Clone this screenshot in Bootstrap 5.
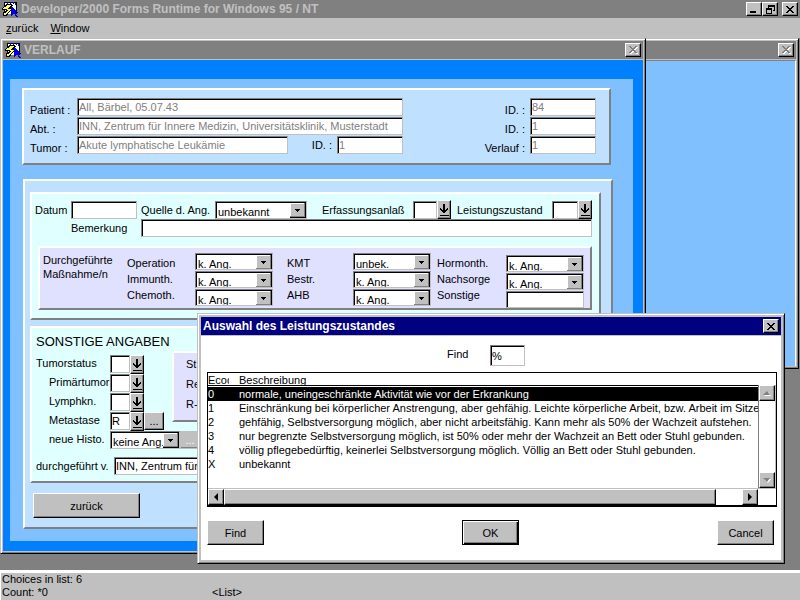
<!DOCTYPE html>
<html lang="de">
<head>
<meta charset="utf-8">
<meta name="viewport" content="width=device-width, initial-scale=1">
<title>Developer/2000 Forms Runtime</title>
<link href="https://cdn.jsdelivr.net/npm/bootstrap@5.3.0/dist/css/bootstrap.min.css" rel="stylesheet">
<style>
:root{--face:#c0c0c0;--shade:#808080;--navy:#000080}
body{font:11px/14px "Liberation Sans",Arial,sans-serif;color:#000;background:var(--shade)}
input,select,button{font:inherit;color:inherit;border-radius:0;margin:0}
h1,h2{font-size:12px;line-height:18px;font-weight:700;margin:0}
label,.tag{white-space:nowrap}

/* title bars */
.titlebar{height:18px;background:var(--shade);color:var(--face);padding:0 2px;overflow:hidden;white-space:nowrap}
.titlebar.active{background:var(--navy);color:#fff}
.app-title{padding-left:3px}
.capbtn{width:16px;height:14px;padding:0;border:1px solid;border-color:#fff #000 #000 #fff;background:var(--face);box-shadow:inset -1px -1px 0 var(--shade);display:flex;align-items:center;justify-content:center}
.menubar{height:20px;background:var(--face);padding:0 6px;gap:12px}
.menubar a{color:#000;text-decoration:none}

/* windows */
.win{border:1px solid;border-color:var(--face) #000 #000 var(--face);box-shadow:inset 1px 1px 0 #fff,inset -1px -1px 0 var(--shade);background:var(--face);padding:2px}
.win-back{left:0;right:1px;top:0;bottom:201px}
.win-main{left:0;right:154px;top:0}
.win-dialog{left:197px;right:15px;top:275px;padding:3px}
.win-main .titlebar,.win-back .titlebar{margin-bottom:1px}
.client{background:#80c0ff;border-top:1px solid var(--shade);border-right:1px solid #fff}
.frame{background:#0080ff;padding:19px 10px 10px 7px}
.sheet{background:#80c0ff;padding:9px 20px 12px 12px}

/* raised panels */
.panel{border:2px solid;border-color:#fff var(--shade) var(--shade) #fff}
.sky{background:#c0e0ff}.mint{background:#e0ffff}.lilac{background:#e0e0ff}

/* fields and buttons */
.fld{height:18px;min-width:0;padding:0 1px;border:1px solid;border-color:var(--shade) var(--face) var(--face) var(--shade);box-shadow:inset 1px 1px 0 #000;background:#fff;outline:0}
.fld[readonly]{color:var(--shade)}
.drop{height:18px;padding:3px 16px 0 2px;line-height:14px;border:1px solid;border-color:var(--shade) var(--face) var(--face) var(--shade);box-shadow:inset 1px 1px 0 #000;appearance:none;outline:0;
background:#fff url("data:image/svg+xml,%3Csvg xmlns='http://www.w3.org/2000/svg' width='16' height='16' shape-rendering='crispEdges'%3E%3Cpath fill='%23000' d='M0 0h16v16H0z'/%3E%3Cpath fill='%23808080' d='M0 1h15v14H0z'/%3E%3Cpath fill='%23fff' d='M0 1h14v13H0z'/%3E%3Cpath fill='%23c0c0c0' d='M1 2h13v12H1z'/%3E%3Cpath d='M5 7h5v1H5zM6 8h3v1H6zM7 9h1v1H7z'/%3E%3C/svg%3E") right center no-repeat}
.pick{width:14px;height:19px;padding:0;border:1px solid;border-color:#fff #000 #000 #fff;background:var(--face);box-shadow:inset -1px -1px 0 var(--shade);display:flex;align-items:center;justify-content:center;flex:none}
.more{width:20px;height:18px;padding:0;line-height:12px;border:1px solid;border-color:#fff #000 #000 #fff;background:var(--face);box-shadow:inset -1px -1px 0 var(--shade);flex:none}
.more:disabled{color:#fff;border-color:var(--face)}
.push{height:25px;padding:0;border:1px solid;border-color:#fff #000 #000 #fff;border-radius:0;background:var(--face);box-shadow:inset -1px -1px 0 var(--shade)}
.w24{width:24px}.w56{width:57px}.w66{width:66px}.w92{width:92px}.w107{width:107px}

/* patient header */
.head-grid{display:grid;grid-template-columns:47px minmax(0,326px) 1fr 66px;grid-auto-rows:18px;row-gap:1px;padding:8px 13px 9px 6px;margin-right:2px}
.head-grid label{align-self:end;line-height:12px}
.head-grid .rlab{text-align:right;padding-right:5px}

/* course data */
.course{margin:14px 0 0 1px;padding:11px 4px 8px}
.topblock{margin:0 6px 0 1px;padding:6px 7px 8px 0}
.topline{padding-left:3px}
.lab-date{width:36px}.lab-src{width:78px;padding-left:4px}.lab-occ{width:106px;padding-left:15px}.lab-perf{width:101px;padding-left:6px}.perf{width:26px}
.remark label{width:109px;padding-left:39px}
.measures{display:grid;grid-template-columns:80px 72px 78px 80px 78px 75px 78px;padding:5px 0 0 3px;margin:9px 0 0 6px}
.stack{display:flex;flex-direction:column;gap:1px}
.stack .fld,.stack .drop{height:17px}
.tags{display:flex;flex-direction:column;gap:2px;padding-top:3px}
.low{padding-top:2px}
.mid{padding-left:14px}.right{padding-left:6px}

/* other data */
.others{margin:6px 6px 0 1px;padding:5px 4px 6px}
.other-title{font-size:13px;font-weight:400;line-height:18px}
.states{width:136px;margin-top:4px}
.state-row{display:grid;grid-template-columns:74px 1fr;height:18px;margin-bottom:1px}
.state-row label{line-height:17px}
.lab-in{padding-left:13px}.s-in{width:20px}.histo{width:70px;flex:none}
.side{height:71px;padding:1px 12px;line-height:20px}
.done{margin-top:7px}.done label{width:78px}
.back{margin:10px 0 1px 4px}

/* value list */
.dlg-body{background:#fff;margin-top:1px;padding:9px 1px 15px}
.findline{padding-right:10px}
.findline label{width:43px;padding-bottom:3px}.find{width:35px;height:21px}
.listbox{border:1px solid #000;border-bottom-width:2px;margin:6px 3px 0 5px}
.lov{table-layout:fixed;width:100%;border-collapse:collapse;margin:0}
.lov th,.lov td{padding:0;font-weight:400;height:14px;line-height:14px;overflow:hidden;white-space:nowrap}
.lov thead th{height:12px}
.lov thead div{height:12px;overflow:hidden}
.lov .code{width:21px}.lov .gut{width:10px}
.lov .picked{background:#000;color:#fff}
.rule{border-bottom:1px solid #000;margin-bottom:1px}
.listview{min-width:0;height:101px;overflow:hidden}
.vbar{width:18px;border-left:1px solid var(--shade);border-right:1px solid var(--face);margin-top:-2px}
.sbtn{width:16px;height:16px;padding:0;border:1px solid;border-color:#fff #000 #000 #fff;background:var(--face);box-shadow:inset -1px -1px 0 var(--shade);display:flex;align-items:center;justify-content:center;flex:none}
.hbar{height:17px;border-top:1px solid var(--face)}
.hend{margin-right:18px}
.thumb{width:95%;border:1px solid;border-color:#fff #000 #000 #fff;background:var(--face);box-shadow:inset -1px -1px 0 var(--shade)}
.actions{margin:13px 6px 0 5px}
.ok{border:1px solid #000;box-shadow:inset 1px 1px 0 #fff,inset -1px -1px 0 #000,inset -2px -2px 0 var(--shade)}

.status{height:30px;background:var(--face);border-top:3px solid #fff;border-left:1px solid #fff;line-height:13px;padding-left:1px}
.status>div{height:13px}
.cnt{width:210px}
</style>
<script src="https://cdn.jsdelivr.net/npm/bootstrap@5.3.0/dist/js/bootstrap.bundle.min.js"></script>
</head>
<body>
<svg class="d-none" aria-hidden="true">
  <symbol id="app" viewBox="0 0 16 16" shape-rendering="crispEdges">
    <path fill="#000" d="M2 1h13v12H2z"/><path fill="#fff" d="M3 2h11v11H3z"/>
    <path fill="#0000ff" d="M5 1h1v2H5zM8 1h1v2H8zM11 1h1v2h-1zM13 2h1v2h-1z"/>
    <path fill="#000" d="M4 3h6v1h1v1h-1v1H9v1h1v2H9v1H8v1H7v1H6v2H5v1H1v-4h2v-1h1V9H0V7h1V6h1V5h1V4h1z"/>
    <path fill="#ffff60" d="M5 4h4v1H8v1H7v1H6v1h3v1H8v1H7v1H6v1H5v1H4v1H2v-2h2v-1h1v-1h1V9H5V8H1V7h1V6h2V5h1z"/>
    <path fill="#0000e0" d="M9 6h2v1h1v1h1v1h1v1h1v1h1v1h-2v2h1v1h1v1h-2v-1h-1v-2h-2v1h-1v1H9z"/>
  </symbol>
  <symbol id="x" viewBox="0 0 8 7" shape-rendering="crispEdges"><path d="M0 0h2v1h1v1h2V1h1V0h2v1H7v1H6v1H5v1h1v1h1v1h1v1H6V6H5V5H3v1H2v1H0V6h1V5h1V4h1V3H2V2H1V1H0z"/></symbol>
  <symbol id="xoff" viewBox="0 0 9 8"><use href="#x" x="1" y="1" width="8" height="7" fill="#fff"/><use href="#x" width="8" height="7" fill="#808080"/></symbol>
  <symbol id="down" viewBox="0 0 10 14" shape-rendering="crispEdges"><path d="M4 1h2v6h1V6h1V5h1v2H8v1H7v1H6v1H4V9H3V8H2V7H1V5h1v1h1v1h1zM1 12h9v1H1z"/></symbol>
</svg>

<div class="d-flex flex-column min-vh-100">
  <header>
    <div class="titlebar d-flex align-items-center">
      <svg width="16" height="16"><use href="#app"/></svg>
      <h1 class="flex-grow-1 app-title">Developer/2000 Forms Runtime for Windows 95 / NT</h1>
      <div class="d-flex">
        <button class="capbtn" aria-label="Minimieren"><svg width="8" height="8"><path d="M0 6h6v2H0z"/></svg></button>
        <button class="capbtn" aria-label="Wiederherstellen"><svg width="9" height="9" shape-rendering="crispEdges"><path d="M2 0h7v6H7V5h1V2H3v1H2zM0 3h6v6H0zM1 5v3h4V5z" fill-rule="evenodd"/></svg></button>
        <button class="capbtn ms-1" aria-label="Beenden"><svg width="8" height="7"><use href="#x"/></svg></button>
      </div>
    </div>
    <nav class="menubar d-flex align-items-center">
      <a href="#"><u>z</u>urück</a><a href="#"><u>W</u>indow</a>
    </nav>
  </header>

  <main class="flex-grow-1 position-relative">
    <section class="win win-back position-absolute d-flex flex-column">
      <div class="titlebar d-flex align-items-center justify-content-end">
        <button class="capbtn" disabled aria-label="Schließen"><svg width="9" height="8"><use href="#xoff"/></svg></button>
      </div>
      <div class="client flex-grow-1"></div>
    </section>

    <section class="win win-main position-absolute">
      <div class="titlebar d-flex align-items-center">
        <svg width="16" height="16"><use href="#app"/></svg>
        <h2 class="flex-grow-1 app-title">VERLAUF</h2>
        <button class="capbtn" disabled aria-label="Schließen"><svg width="9" height="8"><use href="#xoff"/></svg></button>
      </div>
      <div class="frame"><form class="sheet">
        <div class="panel sky head-grid">
          <label for="pat">Patient :</label><input class="fld" id="pat" readonly value="All, Bärbel, 05.07.43">
          <label class="rlab" for="id1">ID. :</label><input class="fld" id="id1" readonly value="84">
          <label for="abt">Abt. :</label><input class="fld" id="abt" readonly value="INN, Zentrum für Innere Medizin, Universitätsklinik, Musterstadt">
          <label class="rlab" for="id2">ID. :</label><input class="fld" id="id2" readonly value="1">
          <label for="tum">Tumor :</label>
          <div class="d-flex"><input class="fld flex-grow-1" id="tum" readonly value="Akute lymphatische Leukämie">
            <label class="rlab ps-4 align-self-center" for="id3">ID. :</label><input class="fld w66" id="id3" readonly value="1"></div>
          <label class="rlab" for="ver">Verlauf :</label><input class="fld" id="ver" readonly value="1">
        </div>

        <div class="panel sky course">
          <div class="panel mint topblock">
            <div class="d-flex align-items-center topline">
              <label class="lab-date" for="dat">Datum</label><input class="fld w66" id="dat">
              <label class="lab-src" for="que">Quelle d. Ang.</label>
              <select class="drop w92" id="que"><option>unbekannt</option></select>
              <label class="lab-occ" for="erf">Erfassungsanlaß</label><input class="fld w24" id="erf"><button type="button" class="pick" aria-label="Liste"><svg width="10" height="14"><use href="#down"/></svg></button>
              <label class="lab-perf" for="lei">Leistungszustand</label><input class="fld perf align-self-end" id="lei"><button type="button" class="pick" aria-label="Liste"><svg width="10" height="14"><use href="#down"/></svg></button>
            </div>
            <div class="d-flex align-items-center remark">
              <label for="bem">Bemerkung</label><input class="fld flex-grow-1" id="bem">
            </div>
            <div class="panel lilac measures">
              <div class="tag">Durchgeführte<br>Maßnahme/n</div>
              <div class="tags ps-1"><label for="m1">Operation</label><label for="m2">Immunth.</label><label for="m3">Chemoth.</label></div>
              <div class="stack"><select class="drop" id="m1"><option>k. Ang.</option></select><select class="drop" id="m2"><option>k. Ang.</option></select><select class="drop" id="m3"><option>k. Ang.</option></select></div>
              <div class="tags mid"><label for="m4">KMT</label><label for="m5">Bestr.</label><label for="m6">AHB</label></div>
              <div class="stack"><select class="drop" id="m4"><option>unbek.</option></select><select class="drop" id="m5"><option>k. Ang.</option></select><select class="drop" id="m6"><option>k. Ang.</option></select></div>
              <div class="tags right"><label for="m7">Hormonth.</label><label for="m8">Nachsorge</label><label for="m9">Sonstige</label></div>
              <div class="stack low"><select class="drop" id="m7"><option>k. Ang.</option></select><select class="drop" id="m8"><option>k. Ang.</option></select><input class="fld" id="m9"></div>
            </div>
          </div>

          <div class="panel mint others">
            <h2 class="other-title">SONSTIGE ANGABEN</h2>
            <div class="d-flex">
              <div class="states">
                <div class="state-row"><label for="s1">Tumorstatus</label><div class="d-flex"><input class="fld s-in" id="s1"><button type="button" class="pick" aria-label="Liste"><svg width="10" height="14"><use href="#down"/></svg></button></div></div>
                <div class="state-row"><label class="lab-in" for="s2">Primärtumor</label><div class="d-flex"><input class="fld s-in" id="s2"><button type="button" class="pick" aria-label="Liste"><svg width="10" height="14"><use href="#down"/></svg></button></div></div>
                <div class="state-row"><label class="lab-in" for="s3">Lymphkn.</label><div class="d-flex"><input class="fld s-in" id="s3"><button type="button" class="pick" aria-label="Liste"><svg width="10" height="14"><use href="#down"/></svg></button></div></div>
                <div class="state-row"><label class="lab-in" for="s4">Metastase</label><div class="d-flex"><input class="fld s-in" id="s4" value="R"><button type="button" class="pick" aria-label="Liste"><svg width="10" height="14"><use href="#down"/></svg></button><button type="button" class="more">...</button></div></div>
                <div class="state-row"><label class="lab-in" for="s5">neue Histo.</label><div class="d-flex"><select class="drop histo" id="s5"><option>keine Ang.</option></select><button type="button" class="more" disabled>...</button></div></div>
              </div>
              <div class="panel lilac side flex-grow-1"><div>St</div><div>Re</div><div>R-</div></div>
            </div>
            <div class="d-flex align-items-center done"><label for="dur">durchgeführt v.</label><input class="fld flex-grow-1" id="dur" value="INN, Zentrum für"></div>
          </div>
          <button type="button" class="push w107 back">zurück</button>
        </div>
      </form></div>
    </section>

    <section class="win win-dialog position-absolute" role="dialog" aria-labelledby="dlg">
      <div class="titlebar active d-flex align-items-center">
        <h2 class="flex-grow-1" id="dlg">Auswahl des Leistungszustandes</h2>
        <button class="capbtn" aria-label="Schließen"><svg width="8" height="7"><use href="#x"/></svg></button>
      </div>
      <div class="dlg-body">
        <div class="d-flex justify-content-center align-items-center findline"><label for="fnd">Find</label><input class="fld find" id="fnd" value="%"></div>
        <div class="listbox">
          <table class="lov rule"><colgroup><col class="code"><col class="gut"><col></colgroup>
            <thead><tr><th><div>Ecode</div></th><th></th><th><div>Beschreibung</div></th></tr></thead></table>
          <div class="d-flex">
            <div class="flex-grow-1 listview">
              <table class="lov"><colgroup><col class="code"><col class="gut"><col></colgroup><tbody>
                <tr class="picked"><td>0</td><td></td><td>normale, uneingeschränkte Aktivität wie vor der Erkrankung</td></tr>
                <tr><td>1</td><td></td><td>Einschränkung bei körperlicher Anstrengung, aber gehfähig. Leichte körperliche Arbeit, bzw. Arbeit im Sitze</td></tr>
                <tr><td>2</td><td></td><td>gehfähig, Selbstversorgung möglich, aber nicht arbeitsfähig. Kann mehr als 50% der Wachzeit aufstehen.</td></tr>
                <tr><td>3</td><td></td><td>nur begrenzte Selbstversorgung möglich, ist 50% oder mehr der Wachzeit an Bett oder Stuhl gebunden.</td></tr>
                <tr><td>4</td><td></td><td>völlig pflegebedürftig, keinerlei Selbstversorgung möglich. Völlig an Bett oder Stuhl gebunden.</td></tr>
                <tr><td>X</td><td></td><td>unbekannt</td></tr>
              </tbody></table>
            </div>
            <div class="vbar d-flex flex-column justify-content-between">
              <button class="sbtn" disabled aria-label="Nach oben"><svg width="8" height="5"><path fill="#fff" d="M1 5l4-4 3 4z"/><path fill="#808080" d="M0 4l4-4 3 4z"/></svg></button>
              <button class="sbtn" disabled aria-label="Nach unten"><svg width="8" height="5"><path fill="#fff" d="M1 1h7l-3 4z"/><path fill="#808080" d="M0 0h7L4 4z"/></svg></button>
            </div>
          </div>
          <div class="hbar d-flex">
            <button class="sbtn" aria-label="Nach links"><svg width="4" height="8"><path d="M4 0v8L0 4z"/></svg></button>
            <div class="flex-grow-1 d-flex"><div class="thumb"></div></div>
            <button class="sbtn hend" aria-label="Nach rechts"><svg width="4" height="8"><path d="M0 0v8l4-4z"/></svg></button>
          </div>
        </div>
        <div class="d-flex justify-content-between actions"><button class="push w56">Find</button><button class="push ok w56">OK</button><button class="push w56">Cancel</button></div>
      </div>
    </section>
  </main>

  <footer class="status">
    <div>Choices in list: 6</div>
    <div class="d-flex"><span class="cnt">Count: *0</span><span>&lt;List&gt;</span></div>
  </footer>
</div>
</body>
</html>
